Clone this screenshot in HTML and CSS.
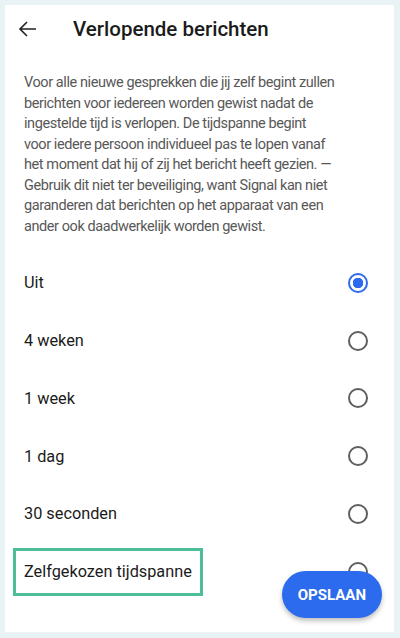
FILE: index.html
```html
<!DOCTYPE html>
<html>
<head>
    <title>Verlopende berichten</title>
    <link rel="stylesheet" href="styles.css">
</head>
<body>
    <div class="screen">
        <div class="toolbar">
            <svg class="back" width="20" height="20" viewBox="0 0 20 20">
                <path d="M18 10H2M9 3L2 10l7 7" fill="none" stroke="#222" stroke-width="1.6"/>
            </svg>
            <h1>Verlopende berichten</h1>
        </div>
        <p class="intro">Voor alle nieuwe gesprekken die jij zelf begint zullen<br>
            berichten voor iedereen worden gewist nadat de<br>
            ingestelde tijd is verlopen. De tijdspanne begint<br>
            voor iedere persoon individueel pas te lopen vanaf<br>
            het moment dat hij of zij het bericht heeft gezien. —<br>
            Gebruik dit niet ter beveiliging, want Signal kan niet<br>
            garanderen dat berichten op het apparaat van een<br>
            ander ook daadwerkelijk worden gewist.</p>
        <div class="options">
            <div class="option"><span>Uit</span><span class="radio checked"></span></div>
            <div class="option"><span>4 weken</span><span class="radio"></span></div>
            <div class="option"><span>1 week</span><span class="radio"></span></div>
            <div class="option"><span>1 dag</span><span class="radio"></span></div>
            <div class="option"><span>30 seconden</span><span class="radio"></span></div>
            <div class="option"><span class="highlight">Zelfgekozen tijdspanne</span><span class="radio"></span></div>
        </div>
        <button class="save">OPSLAAN</button>
    </div>
</body>
</html>
```

FILE: styles.css
```css
body {
    margin: 0;
    background-color: #e9f3f6;
    font-family: Roboto, "Liberation Sans", sans-serif;
}
.screen {
    position: relative;
    margin: 5px 6px 6px 5px;
    height: 627px;
    background: white;
    overflow: hidden;
}
.toolbar {
    display: flex;
    align-items: center;
    height: 48px;
    padding-left: 13px;
}
.back {
    margin-right: 35px;
}
h1 {
    margin: 0;
    font-size: 20.5px;
    font-weight: 500;
    color: #1b1b1b;
}
.intro {
    margin: 20px 8px 0 19px;
    font-size: 14.5px;
    letter-spacing: -0.42px;
    line-height: 20.5px;
    color: #585858;
}
.options {
    margin-top: 17px;
}
.option {
    display: flex;
    align-items: center;
    justify-content: space-between;
    height: 57.75px;
    padding: 0 26px 0 19px;
    font-size: 16.3px;
    color: #1b1b1b;
}
.radio {
    width: 16px;
    height: 16px;
    border: 2px solid #5f5f5f;
    border-radius: 50%;
}
.radio.checked {
    border-color: #2c6bed;
    background: radial-gradient(circle, #2c6bed 0 5px, white 5.5px);
}
.highlight {
    margin-left: -11px;
    padding: 11.5px 8px;
    border: 3px solid #4cbf96;
}
.save {
    position: absolute;
    right: 12px;
    bottom: 14px;
    height: 47px;
    padding: 0 16px;
    border: none;
    border-radius: 24px;
    background-color: #2c6bed;
    color: white;
    font-family: Roboto, "Liberation Sans", sans-serif;
    font-size: 15px;
    font-weight: 700;
    box-shadow: 0 3px 5px rgba(0, 0, 0, 0.25);
}
```
